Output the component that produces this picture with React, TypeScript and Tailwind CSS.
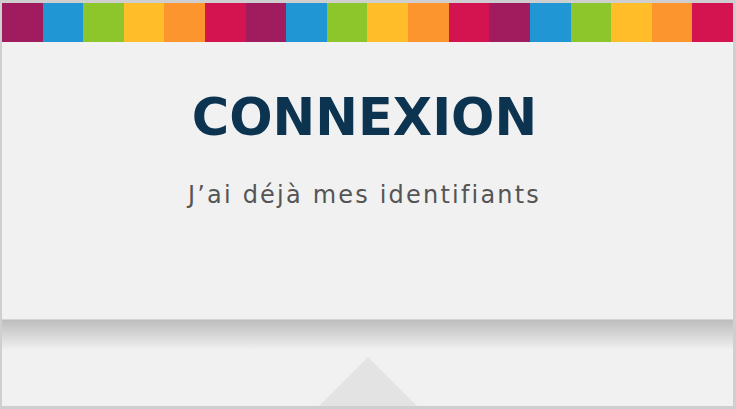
import React from "react";

const colors = ["#a01c5f", "#2196d4", "#8dc62b", "#ffbd2a", "#fd952f", "#d41450"];

export default function App() {
  const stripes = Array.from({ length: 18 }, (_, i) => colors[i % 6]);
  return (
    <div className="w-[736px] h-[409px] bg-[#f1f1f1] border-[#cfcfcf] border-t-[3px] border-l-[2px] border-r-[3px] border-b-[3px] flex flex-col overflow-hidden">
      <div className="flex h-[39px] shrink-0">
        {stripes.map((c, i) => (
          <div key={i} className="flex-1 h-full" style={{ backgroundColor: c }} />
        ))}
      </div>
      <div className="h-[278px] shrink-0 flex flex-col items-center pt-[50px] pr-[6px] border-b border-[#d4d4d4]">
        <h1
          className="text-[51px] leading-[51px] font-bold text-[#0c3350] whitespace-nowrap"
          style={{ fontFamily: '"DejaVu Sans", Verdana, sans-serif' }}
        >
          CONNEXION
        </h1>
        <p
          className="mt-[40px] text-[24px] leading-[24px] text-[#555555] tracking-[2.2px] whitespace-nowrap"
          style={{ fontFamily: '"DejaVu Sans", Verdana, sans-serif' }}
        >
          J’ai déjà mes identifiants
        </p>
      </div>
      <div className="flex-1 flex flex-col bg-gradient-to-b from-[#bdbdbd] via-[#f1f1f1] via-[35%] to-[#f1f1f1]">
        <div className="flex-1" />
        <div className="flex justify-center">
          <div className="w-0 h-0 border-l-[49px] border-r-[49px] border-b-[49px] border-l-transparent border-r-transparent border-b-[#e3e3e3]" />
        </div>
      </div>
    </div>
  );
}
